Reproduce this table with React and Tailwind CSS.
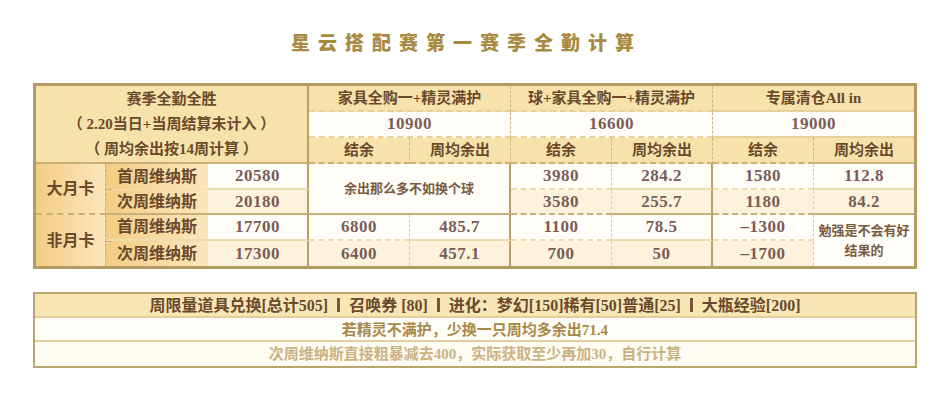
const FONT = { fontFamily: '"Liberation Serif", "Noto Sans CJK SC", serif' };

const groups = [
  { title: "家具全购一+精灵满护", cost: "10900" },
  { title: "球+家具全购一+精灵满护", cost: "16600" },
  { title: "专属清仓All in", cost: "19000" },
];

const gold = "bg-[#f7e2ab]";
const white = "bg-[#fffdf8]";
const cream = "bg-[#fdf3dc]";
const labelBg = "bg-gradient-to-r from-[#f3cd84] to-[#fbe7bd]";

const Num = ({ children, bg, dashed, last, line = "border-b-2 border-b-[#ecdcae]" }) => (
  <td
    className={`${bg} ${line} p-0 text-center text-[17px] leading-[20px] tracking-[0.5px] font-bold text-[#7b5c58] ${
      dashed ? "border-r border-r-[#dccba0] border-dashed" : last ? "" : "border-r-2 border-r-[#b9a068]"
    }`}
  >
    {children}
  </td>
);

const Sep = () => <span className="inline-block w-[3px] h-[14px] bg-[#7a5534] mx-[9px] align-[-1px]" />;

export default function App() {
  return (
    <div className="w-[950px] h-[400px] bg-white" style={FONT}>
      <div className="pt-[33px] pr-[17px] h-[83px] text-center text-[19px] font-black tracking-[8px] text-[#a88a42] leading-[22px]">
        星云搭配赛第一赛季全勤计算
      </div>

      <div className="mx-[33px] border-[3px] border-[#b39b62]">
        <table className="w-full table-fixed border-separate border-spacing-0 text-[#6b4a2c]">
          <colgroup>
            <col className="w-[70px]" />
            <col className="w-[102px]" />
            <col className="w-[101px]" />
            <col className="w-[101px]" />
            <col className="w-[101px]" />
            <col className="w-[101px]" />
            <col className="w-[101px]" />
            <col className="w-[101px]" />
            <col />
          </colgroup>
          <tbody>
            <tr className="h-[26px]">
              <td
                rowSpan={3}
                colSpan={3}
                className={`${gold} p-0 border-r-2 border-r-[#b9a068] border-b-2 border-b-[#c9b078] text-center text-[15px] font-bold leading-[25px]`}
              >
                <div>赛季全勤全胜</div>
                <div>（ 2.20当日+当周结算未计入 ）</div>
                <div>（ 周均余出按14周计算 ）</div>
              </td>
              {groups.map((g, i) => (
                <td
                  key={g.title}
                  colSpan={2}
                  className={`${gold} p-0 border-b-2 border-b-[#e6d19c] text-center text-[15px] leading-[20px] font-bold ${
                    i < 2 ? "border-r border-r-[#cdb57f] border-dashed" : ""
                  }`}
                >
                  {g.title}
                </td>
              ))}
            </tr>
            <tr className="h-[26px]">
              {groups.map((g, i) => (
                <td
                  key={g.cost}
                  colSpan={2}
                  className={`${white} p-0 border-b-2 border-b-[#e6d19c] text-center text-[17px] leading-[20px] tracking-[0.5px] font-bold text-[#7b5c58] ${
                    i < 2 ? "border-r border-r-[#cdb57f] border-dashed" : ""
                  }`}
                >
                  {g.cost}
                </td>
              ))}
            </tr>
            <tr className="h-[26px]">
              {groups.map((g, i) => [
                <td
                  key={g.cost + "a"}
                  className={`${gold} p-0 border-b-2 border-b-[#c9b078] border-r border-r-[#cdb57f] border-dashed text-center text-[15px] leading-[20px] font-bold`}
                >
                  结余
                </td>,
                <td
                  key={g.cost + "b"}
                  className={`${gold} p-0 border-b-2 border-b-[#c9b078] text-center text-[15px] leading-[20px] font-bold ${
                    i < 2 ? "border-r border-r-[#cdb57f] border-dashed" : ""
                  }`}
                >
                  周均余出
                </td>,
              ])}
            </tr>

            {/* 大月卡 */}
            <tr className="h-[26px]">
              <td
                rowSpan={2}
                className={`${labelBg} p-0 relative border-b-2 border-b-[#c9b078] border-r border-r-[#c9ae74] border-dashed text-center text-[16px] leading-[20px] font-bold`}
              >
                大月卡
                <span className="absolute right-[-7px] top-1/2 w-[7px] h-px bg-[#c9ae74]" />
              </td>
              <td className={`${labelBg} p-0 border-b border-b-[#f0dfb2] text-center text-[16px] leading-[20px] font-bold`}>首周维纳斯</td>
              <Num bg={white}>20580</Num>
              <td
                rowSpan={2}
                colSpan={2}
                className={`${white} p-0 border-b-2 border-b-[#c9b078] border-r-2 border-r-[#b9a068] text-center text-[13px] leading-[20px] font-bold text-[#7a5a40]`}
              >
                余出那么多不如换个球
              </td>
              <Num bg={white} dashed>3980</Num>
              <Num bg={white}>284.2</Num>
              <Num bg={white} dashed>1580</Num>
              <Num bg={white} last>112.8</Num>
            </tr>
            <tr className="h-[25px]">
              <td className={`${labelBg} p-0 border-b-2 border-b-[#c9b078] text-center text-[16px] leading-[20px] font-bold`}>次周维纳斯</td>
              <Num bg={cream} line="border-b-2 border-b-[#c9b078]">20180</Num>
              <Num bg={cream} dashed line="border-b-2 border-b-[#c9b078]">3580</Num>
              <Num bg={cream} line="border-b-2 border-b-[#c9b078]">255.7</Num>
              <Num bg={cream} dashed line="border-b-2 border-b-[#c9b078]">1180</Num>
              <Num bg={cream} last line="border-b-2 border-b-[#c9b078]">84.2</Num>
            </tr>

            {/* 非月卡 */}
            <tr className="h-[26px]">
              <td
                rowSpan={2}
                className={`${labelBg} p-0 relative border-r border-r-[#c9ae74] border-dashed text-center text-[16px] leading-[20px] font-bold`}
              >
                非月卡
                <span className="absolute right-[-7px] top-1/2 w-[7px] h-px bg-[#c9ae74]" />
              </td>
              <td className={`${labelBg} p-0 border-b-2 border-b-[#ecdcae] text-center text-[16px] leading-[20px] font-bold`}>首周维纳斯</td>
              <Num bg={white}>17700</Num>
              <Num bg={white} dashed>6800</Num>
              <Num bg={white}>485.7</Num>
              <Num bg={white} dashed>1100</Num>
              <Num bg={white}>78.5</Num>
              <Num bg={white} dashed>–1300</Num>
              <td
                rowSpan={2}
                className={`${white} text-center text-[13px] font-bold leading-[20px] text-[#7a5a40] px-1 py-0`}
              >
                勉强是不会有好结果的
              </td>
            </tr>
            <tr className="h-[25px]">
              <td className={`${labelBg} p-0 text-center text-[16px] leading-[20px] font-bold`}>次周维纳斯</td>
              <Num bg={cream} line="">17300</Num>
              <Num bg={cream} dashed line="">6400</Num>
              <Num bg={cream} line="">457.1</Num>
              <Num bg={cream} dashed line="">700</Num>
              <Num bg={cream} line="">50</Num>
              <Num bg={cream} dashed line="">–1700</Num>
            </tr>
          </tbody>
        </table>
      </div>

      <div className="mx-[33px] mt-[23px] border-2 border-[#bca56d] text-center font-bold">
        <div className="h-[24px] leading-[24px] bg-[#f8e6b6] border-b-2 border-b-[#e2cf9c] text-[16px] text-[#6b4a2c]">
          周限量道具兑换[总计505]
          <Sep />
          召唤券 [80]
          <Sep />
          进化：梦幻[150]稀有[50]普通[25]
          <Sep />
          大瓶经验[200]
        </div>
        <div className="h-[24px] leading-[24px] bg-[#fffdf8] border-b-2 border-b-[#e2cf9c] text-[15px] text-[#a88848]">
          若精灵不满护，少换一只周均多余出71.4
        </div>
        <div className="h-[24px] leading-[24px] bg-[#fffcf4] text-[15px] text-[#cbb283]">
          次周维纳斯直接粗暴减去400，实际获取至少再加30，自行计算
        </div>
      </div>
    </div>
  );
}
